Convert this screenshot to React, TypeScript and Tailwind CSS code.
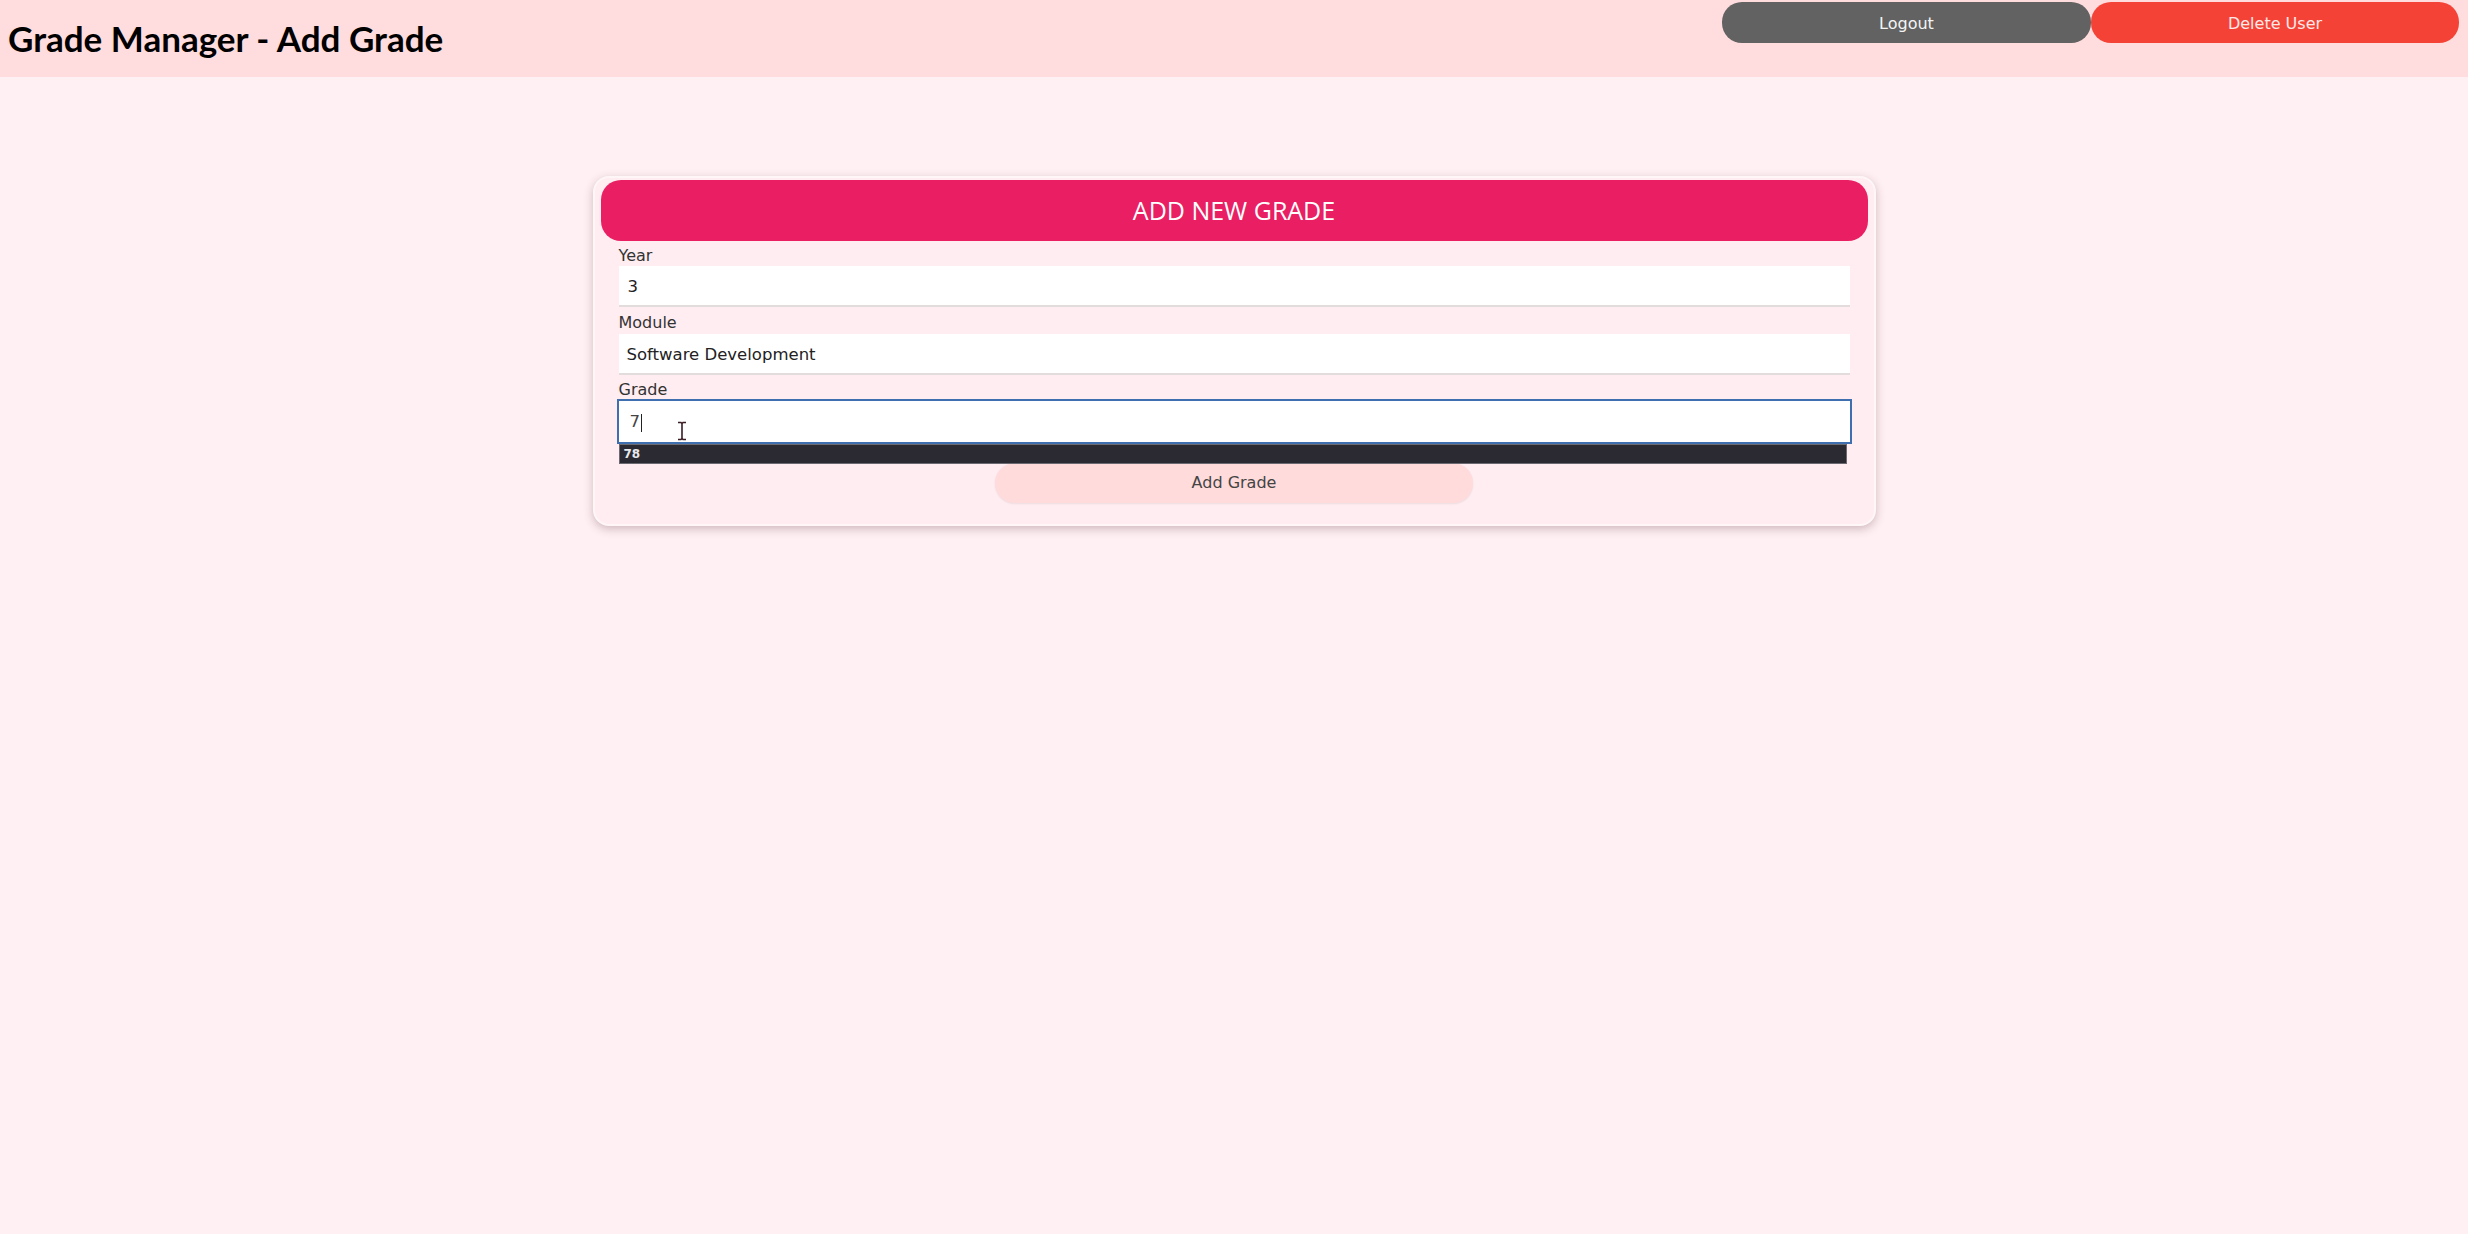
export default function App() {
  return (
    <div className="min-h-[1234px] bg-[#fff0f3]" style={{ fontFamily: '"DejaVu Sans", Verdana, sans-serif' }}>
      <header className="flex h-[77px] items-start justify-between bg-[#ffdcdd]">
        <h1
          className="self-center pl-[8px] text-[35px] font-bold text-black"
          style={{ fontFamily: 'Lato, "Open Sans", sans-serif' }}
        >
          Grade Manager - Add Grade
        </h1>
        <div className="flex pr-[9px] pt-[2px]">
          <button className="h-[41px] w-[369px] rounded-[20px] bg-[#626262] pt-[2px] text-[16px] text-[#f4f4f4]">
            Logout
          </button>
          <button className="h-[41px] w-[368px] rounded-[20px] bg-[#f44336] pt-[2px] text-[16px] text-[#fde8e8]">
            Delete User
          </button>
        </div>
      </header>

      <main className="flex justify-center pt-[99px]">
        <div className="w-[1283px] rounded-[16px] border-2 border-[#fff6f8] bg-[#ffedf2] px-[6px] pb-[21px] pt-[2px] shadow-[0_3px_10px_rgba(80,40,50,0.28)]">
          <div
            className="flex h-[61px] items-center justify-center rounded-[20px] bg-[#e91e63] text-[25px] text-white"
            style={{ fontFamily: '"Open Sans", sans-serif' }}
          >
            ADD NEW GRADE
          </div>

          <form className="flex flex-col px-[18px] pt-[5px]">
            <label className="text-[16px] leading-[19px] text-[#333]">Year</label>
            <div className="mt-[1px] flex h-[41px] items-center border-b-2 border-[#e2dcdd] bg-white pl-[9px] pt-[3px] text-[16.5px] text-[#222]">
              3
            </div>

            <label className="mt-[6px] text-[16px] leading-[19px] text-[#333]">Module</label>
            <div className="mt-[2px] flex h-[41px] items-center border-b-2 border-[#e2dcdd] bg-white pl-[8px] pt-[3px] text-[16.5px] text-[#222]">
              Software Development
            </div>

            <label className="mt-[5px] text-[16px] leading-[19px] text-[#333]">Grade</label>
            <div className="relative -mx-[2px]">
              <div className="flex h-[45px] items-center border-2 border-[#3f6fae] bg-white pl-[11px] pt-[2px] text-[16.5px] text-[#444]">
                7<span className="ml-[1px] inline-block h-[18px] w-[1px] bg-[#222]" />
              </div>
              {/* I-beam mouse cursor */}
              <svg className="absolute left-[59px] top-[22px]" width="12" height="20" viewBox="0 0 12 20">
                <path
                  d="M2 1.5h3l1 1 1-1h3M6 2.5v15M2 18.5h3l1-1 1 1h3"
                  fill="none"
                  stroke="#fff"
                  strokeWidth="3"
                  strokeLinecap="round"
                />
                <path d="M2 1.5h3l1 1 1-1h3M6 2.5v15M2 18.5h3l1-1 1 1h3" fill="none" stroke="#3a1d25" strokeWidth="1.6" />
              </svg>
              {/* datalist suggestion popup */}
              <div className="absolute left-[2px] right-[5px] top-[45px] z-10 flex h-[20px] items-center border border-[#6b6a70] bg-[#2b2a33] pl-[4px] text-[12px] font-semibold text-[#e8e8ec]">
                78
              </div>
            </div>

            <button
              type="button"
              className="mx-auto mt-[19px] h-[40px] w-[478px] rounded-[20px] bg-[#ffdbdc] text-[16px] text-[#444] shadow-[0_1px_2px_rgba(0,0,0,0.08)]"
            >
              Add Grade
            </button>
          </form>
        </div>
      </main>
    </div>
  )
}
